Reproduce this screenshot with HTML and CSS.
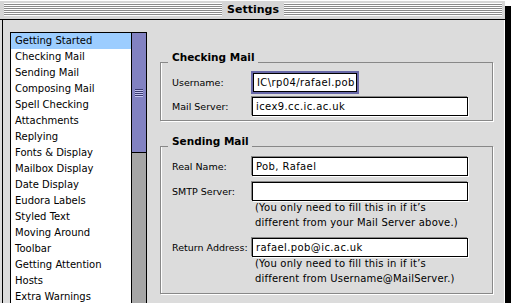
FILE: index.html
```html
<!DOCTYPE html>
<html lang="en">
<head>
  <meta charset="UTF-8" />
  <title>Settings</title>
  <link rel="stylesheet" href="styles.css">
</head>
<body>
  <div class="window">
    <div class="titlebar">
      <span class="stripes"></span>
      <span class="title">Settings</span>
      <span class="stripes"></span>
    </div>
    <div class="content">
      <div class="listbox">
        <ul class="list">
          <li class="selected">Getting Started</li>
          <li>Checking Mail</li>
          <li>Sending Mail</li>
          <li>Composing Mail</li>
          <li>Spell Checking</li>
          <li>Attachments</li>
          <li>Replying</li>
          <li>Fonts &amp; Display</li>
          <li>Mailbox Display</li>
          <li>Date Display</li>
          <li>Eudora Labels</li>
          <li>Styled Text</li>
          <li>Moving Around</li>
          <li>Toolbar</li>
          <li>Getting Attention</li>
          <li>Hosts</li>
          <li>Extra Warnings</li>
        </ul>
        <div class="scrollbar">
          <div class="thumb"><span class="grip"></span></div>
        </div>
      </div>
      <div class="panel">
        <fieldset class="group">
          <legend>Checking Mail</legend>
          <div class="row">
            <span class="label">Username:</span>
            <span class="field short focus">IC\rp04/rafael.pob</span>
          </div>
          <div class="row">
            <span class="label">Mail Server:</span>
            <span class="field">icex9.cc.ic.ac.uk</span>
          </div>
        </fieldset>
        <fieldset class="group sending">
          <legend>Sending Mail</legend>
          <div class="row">
            <span class="label">Real Name:</span>
            <span class="field">Pob, Rafael</span>
          </div>
          <div class="row">
            <span class="label">SMTP Server:</span>
            <span class="field"></span>
          </div>
          <p class="note">(You only need to fill this in if it’s<br>different from your Mail Server above.)</p>
          <div class="row">
            <span class="label">Return Address:</span>
            <span class="field">rafael.pob@ic.ac.uk</span>
          </div>
          <p class="note">(You only need to fill this in if it’s<br>different from Username@MailServer.)</p>
        </fieldset>
      </div>
    </div>
  </div>
</body>
</html>
```

FILE: styles.css
```css
* { margin: 0; padding: 0; box-sizing: border-box; }
body {
  background: #fff;
  font-family: "DejaVu Sans", sans-serif;
  font-size: 10px;
  color: #000;
}
.window {
  width: 505px;
  height: 303px;
  background: #dcdcdc;
  box-shadow: 6px 6px 0 #000;
  display: flex;
  flex-direction: column;
  overflow: hidden;
}
.titlebar {
  height: 20px;
  display: flex;
  align-items: center;
  padding: 0 3px 1px 4px;
  border-top: 1px solid #fff;
  border-bottom: 1px solid #000;
  background: #d6d6d6;
}
.stripes {
  flex: 1;
  height: 13px;
  background: repeating-linear-gradient(to bottom, #fff 0 1px, #8a8a8a 1px 2px);
}
.title {
  font-weight: bold;
  font-size: 11px;
  padding: 0 5px;
}
.content {
  flex: 1;
  display: flex;
  margin-left: 2px;
  border-left: 1px solid #000;
  border-right: 1px solid #fff;
  padding: 12px 0 0 7px;
  min-height: 0;
}
.listbox {
  width: 137px;
  display: flex;
  border: 1px solid #000;
  border-bottom: 0;
}
.list {
  flex: 1;
  list-style: none;
  background: #fff;
}
.list li {
  height: 16px;
  line-height: 16px;
  padding-left: 4px;
  white-space: nowrap;
}
.list li.selected { background: #9ccdff; }
.scrollbar {
  width: 15px;
  border-left: 1px solid #000;
  background: #a6a6a6;
}
.thumb {
  height: 120px;
  background: #8282c2;
  border-bottom: 1px solid #000;
  display: flex;
  align-items: center;
  justify-content: center;
}
.grip {
  width: 8px;
  height: 8px;
  background: repeating-linear-gradient(to bottom, #3a3a70 0 1px, #c4c4f0 1px 2px);
}
.panel {
  width: 333px;
  margin: 19px 0 0 13px;
  align-self: flex-start;
}
.group {
  border: 1px solid #888;
  box-shadow: 1px 1px 0 #fff, inset 1px 0 0 #fff;
  padding: 0 5px 4px 11px;
}
.group.sending {
  margin-top: 14px;
  padding-bottom: 7px;
}
.group legend {
  font-weight: bold;
  font-size: 10.5px;
  line-height: 13px;
  padding: 0 3px 9px 4px;
  margin-left: -4px;
}
.row {
  display: flex;
  align-items: center;
  height: 19px;
  margin-bottom: 5px;
}
.row:last-child { margin-bottom: 0; }
.sending .row { margin-bottom: 6px; }
.label {
  width: 80px;
  font-size: 9.5px;
  white-space: nowrap;
}
.field {
  width: 216px;
  height: 19px;
  border: 1px solid #000;
  background: #fff;
  box-shadow: -1px -1px 0 #888, 1px 1px 0 #fff;
  padding: 0 3px;
  line-height: 17px;
  font-size: 10px;
  letter-spacing: 0.4px;
  white-space: nowrap;
  overflow: hidden;
}
.field.short { width: 104px; margin-left: 1px; }
.field.focus { box-shadow: 0 0 0 2px #6868a8; }
.note {
  margin: -7px 0 8px 80px;
  padding-left: 3px;
  font-size: 10px;
  letter-spacing: 0.2px;
  line-height: 15px;
}
.note:last-child { margin-bottom: 0; }
```
